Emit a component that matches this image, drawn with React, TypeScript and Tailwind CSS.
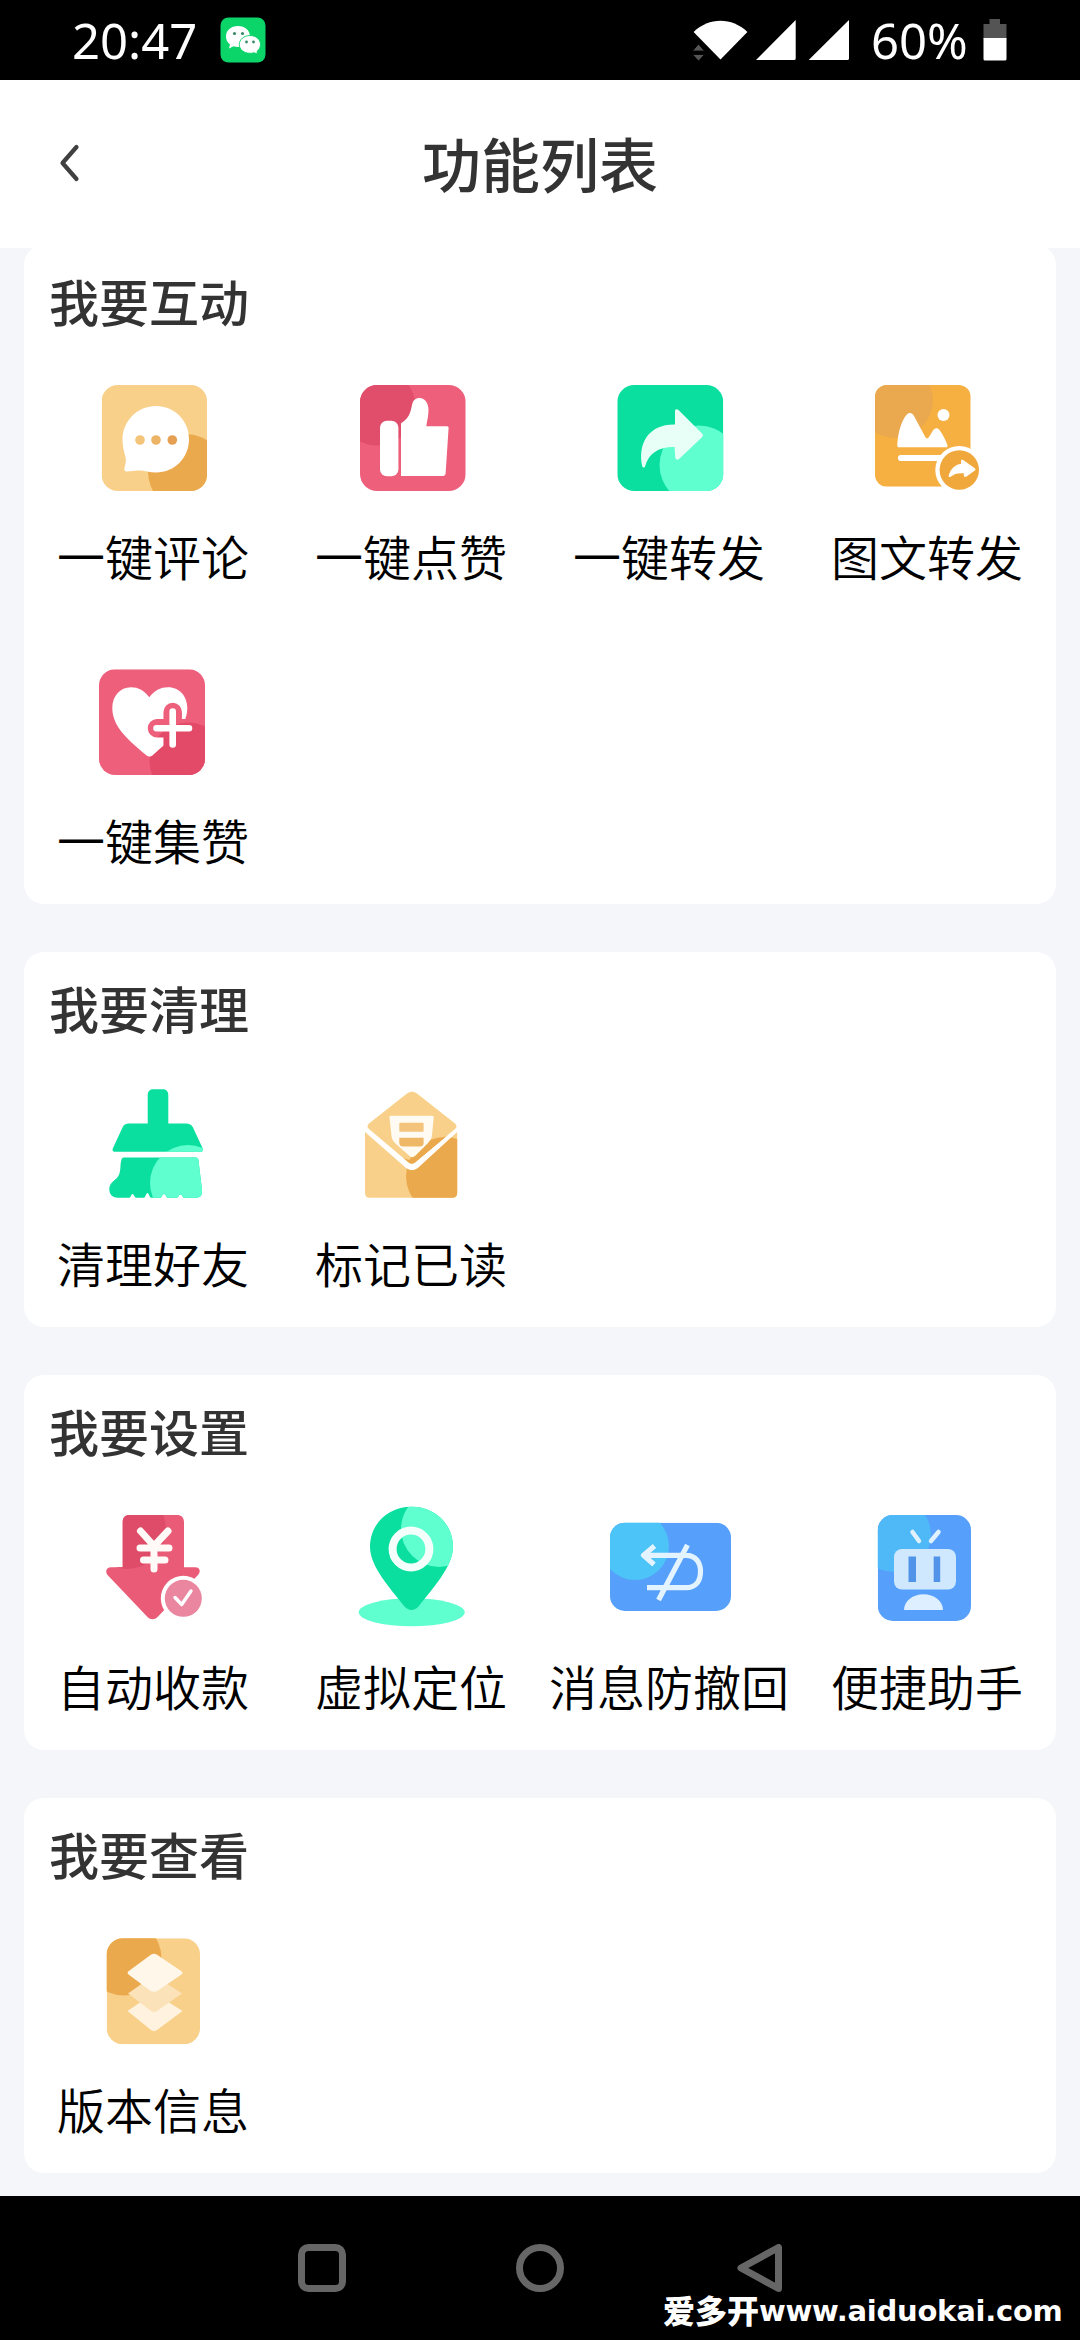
import type { ReactNode } from "react";

const GOLD = "#f8d08a";
const AMBER = "#eaa94d";
const PINK = "#ee5f7c";
const ROSE = "#e04e6c";
const GREEN = "#0adf9f";
const MINT = "#5fffd0";
const BLUE = "#569ffa";
const SKY = "#4dc4f8";

function Tile({ id, x, y, w, h, r, base, spot, cx, cy, cr, children }: {
  id: string; x: number; y: number; w: number; h: number; r: number;
  base: string; spot: string; cx: number; cy: number; cr: number; children?: ReactNode;
}) {
  return (
    <>
      <clipPath id={id}><rect x={x} y={y} width={w} height={h} rx={r} /></clipPath>
      <g clipPath={`url(#${id})`}>
        <rect x={x} y={y} width={w} height={h} fill={base} />
        <circle cx={cx} cy={cy} r={cr} fill={spot} />
      </g>
      {children}
    </>
  );
}

const commentIcon = (
  <Tile id="comment" x={18.7} y={7} w={105.3} h={106} r={16} base={GOLD} spot={AMBER} cx={103} cy={94} cr={38}>
    <path d="M73 28C91.500 28 106 42.500 106 61S92 94.500 73 94.500C66 94.500 60 92 55 92.500L44 93.500C41.500 93.700 41 92 41.500 90C42.300 86.500 43.500 83 42.500 79C40.500 73 39.500 67 39.500 61C40 42.500 54.500 28 73 28Z" fill="#fff" />
    <circle cx="57" cy="62" r="4.800" fill="#f3c479" />
    <circle cx="73" cy="62" r="4.800" fill="#eeb465" />
    <circle cx="89.300" cy="62" r="4.800" fill="#e5a051" />
  </Tile>
);

const likeIcon = (
  <Tile id="like" x={19} y={7} w={105.7} h={106} r={17} base={PINK} spot={ROSE} cx={36} cy={29} cr={38.5}>
    <rect x="39" y="42.700" width="18.400" height="55.600" rx="7" fill="#fff" />
    <path d="M60 46C60 45 61 44.500 62.500 43.500C67.500 40 69.500 35 71 27C71.800 22.500 74.500 20 78.500 20C84 20 87.500 25 87.500 32C87.500 38 86 43 85.300 48.200H106C107.200 48.200 107.700 49 107.600 50L104.600 95.500C104.500 97 103.500 98 102 98H60Z" fill="#fff" />
  </Tile>
);

const shareIcon = (
  <Tile id="share" x={18.3} y={7} w={106} h={106} r={17} base={GREEN} spot={MINT} cx={100} cy={87} cr={39.5}>
    <path d="M76 46.500V33C76 31 78 30.500 79.500 32L103 55.500C104.300 56.800 104.300 58 103 59.300L80 81C78.500 82.500 76.500 81.500 76.300 79.500L75.500 69C61 68.500 50 74.500 46.200 88C45.500 90 43.800 90 43.200 88C38.500 65 50 46 76 46.500Z" fill="#e7fff6" />
  </Tile>
);

const imageShareIcon = (
  <Tile id="imgshare" x={18} y={7} w={95.7} h={101.7} r={12} base="#f6b042" spot="#eaa84f" cx={38} cy={22} cr={38}>
    <path d="M42 69.300C40.800 69.300 40.200 68.500 40.300 67C40.800 56 44 43 49.500 37C52 34 55 34.500 57 38L68 58.500C69.300 61 71 61 72.300 58.500L76 52.500C78 49.500 80.500 49.500 82.500 52C86 57 89 62.500 90.500 67.500C90.800 68.700 90.300 69.300 89 69.300Z" fill="#fff" />
    <circle cx="86.500" cy="37" r="6" fill="#fff" />
    <path d="M44 80H86" stroke="#fff" strokeWidth="6.200" strokeLinecap="round" />
    <circle cx="102.300" cy="92" r="24" fill="#fff" />
    <circle cx="102.300" cy="92" r="19.700" fill="#f0a83c" />
    <path d="M104 86V83C104 81.500 105.300 81.300 106.500 82.200L117.500 90C118.800 91 118.800 92 117.500 92.800L109.500 98.500C108 99.500 106.800 98.800 106.800 97.300V95.300C101 94.800 97 96 94 98.500C92.500 99.700 91.300 99 91.700 97.500C93.500 91 98 86.500 104 86Z" fill="#fff" />
  </Tile>
);

const heartPlusIcon = (
  <Tile id="heart" x={16} y={7.3} w={106} h={105.7} r={16} base={PINK} spot="#e34a68" cx={105} cy={99} cr={38.5}>
    <mask id="heartcut">
      <rect width="140" height="120" fill="#fff" />
      <path d="M89.700 50V91M74 66.300H109" stroke="#000" strokeWidth="18.500" strokeLinecap="round" strokeLinejoin="round" />
    </mask>
    <path mask="url(#heartcut)" d="M66.300 35.300C71 28.500 77.500 25.200 85 25.200C96.500 25.200 104.300 34 104.300 46C104.300 67 84 80 70.500 92.500C67.500 95.200 65.500 95.200 62.500 92.500C48 80 29.300 66 29.300 46C29.300 34 37 25.200 48 25.200C55.500 25.200 61.500 28.500 66.300 35.300Z" fill="#fff" />
    <path d="M89.700 49.500V82.500M73.500 66.300H106" stroke="#fff" strokeWidth="6.600" strokeLinecap="round" />
  </Tile>
);

const broomIcon = (
  <g transform="translate(0 -10)">
    <clipPath id="broom">
      <path d="M64.700 48.500V20C64.700 16.300 67 14.300 70.500 14.300H79.500C83 14.300 85.300 16.300 85.300 20V48.500H103C106.500 48.500 108.300 49.500 110 52.500L119.500 73C120.500 75.500 119.800 76.700 117.500 76.700H32C29.700 76.700 29 75.500 30 73L39.500 52.500C41 49.500 42.500 48.500 46 48.500ZM41 82.500H112.500C114.500 82.500 115.300 83.300 115.500 85.500L119 115C119.500 120 117.500 122.700 113 122.700H101C99.500 122.700 99.500 119.500 97.500 119.500S95.500 122.700 94 122.700H84.500C83 122.700 83 119 81 119S79 122.700 77.500 122.700H68C66.500 122.700 66 118 64.500 118S62.500 122.700 61 122.700H53C51.500 122.700 51 119 49.500 119S48 122.700 46.500 122.700H35C29 122.700 26.300 119 26.300 114C26.300 109 30 106.500 33.500 103.500C39 98 36.500 90 38.500 84.500C38.900 83.200 39.500 82.500 41 82.500Z" />
    </clipPath>
    <g clipPath="url(#broom)">
      <rect y="10" width="140" height="120" fill={GREEN} />
      <circle cx="105" cy="108" r="38" fill={MINT} />
    </g>
  </g>
);

const mailIcon = (
  <g transform="translate(0 -10)">
    <clipPath id="mail">
      <path d="M66 18.500C69.500 16 72.500 16 76 18.500L114 48.500C116 50.500 116 52.500 114 54L74.500 87C72 89 69.500 89 67 87L28 54C26 52.500 26 50.500 28 48.500ZM24 57L64.500 92.500C69 96 73 96 77.500 92.500L116.200 57V118C116.200 121 114.500 122.700 111.500 122.700H28.500C25.500 122.700 24 121 24 118Z" />
    </clipPath>
    <g clipPath="url(#mail)">
      <rect y="10" width="140" height="120" fill={GOLD} />
      <circle cx="104" cy="101" r="39" fill={AMBER} />
      <path d="M71 92L62 83L71.500 86L94 66L108 60Z" fill={AMBER} />
    </g>
    <path d="M50 40.700H91C92.300 40.700 92.800 41.500 92.700 42.700L91 60C90.800 63 89.500 65.500 87 68L74 81C72.300 82.500 70.300 82.500 68.500 81L55 69C52.500 66.500 51 64.500 50.500 61L48.500 42.700C48.400 41.500 48.800 40.700 50 40.700Z" fill="#fffaf2" />
    <rect x="58.300" y="47.700" width="24.300" height="9" rx="1" fill="#f4c47c" />
    <path d="M58.300 62.700H82.600V68C82.600 70.500 81 71.500 79 71.500H62C60 71.500 58.300 70.500 58.300 68Z" fill="#efb867" />
  </g>
);

const payIcon = (
  <g transform="translate(0 -12)">
    <clipPath id="pay">
      <path d="M39.700 71.300V26C39.700 21.500 42.300 19 46.500 19H94C98.300 19 101 21.500 101 26V71.300H112C117 71.300 118 75.500 115 79L74.500 121C71.500 124 67.500 124 64.500 121L25 79.500C21.500 75.500 23.500 71.300 28 71.300Z" />
    </clipPath>
    <g clipPath="url(#pay)">
      <rect y="10" width="140" height="120" fill="#ea5b78" />
      <circle cx="44" cy="34" r="39" fill="#df4c69" />
    </g>
    <path d="M57.500 35L71 50L85 35M71 50V73M57 52H86M60.500 64H82" fill="none" stroke="#fffaf8" strokeWidth="7" strokeLinecap="round" strokeLinejoin="round" />
    <circle cx="100.300" cy="102.300" r="22.500" fill="#fff" />
    <circle cx="100.300" cy="102.300" r="18.500" fill="#ea869f" />
    <path d="M92 101.500L98.700 108.500L108 95" fill="none" stroke="#fff" strokeWidth="3.400" strokeLinecap="round" strokeLinejoin="round" />
  </g>
);

const pinIcon = (
  <g transform="translate(0 -12)">
    <ellipse cx="70.700" cy="116.300" rx="53" ry="14" fill={MINT} />
    <clipPath id="pin">
      <path d="M70.500 10.700C94 10.700 112 28 112 51C112 71 91 93 77.500 110.500C73.500 115 67.500 115 63.500 110.500C50 93 29 71 29 51C29 28 47 10.700 70.500 10.700Z" />
    </clipPath>
    <g clipPath="url(#pin)">
      <rect width="140" height="120" fill={GREEN} />
      <circle cx="98" cy="33" r="38" fill={MINT} />
    </g>
    <circle cx="70" cy="53" r="18.400" fill="none" stroke="#f4fffb" strokeWidth="8" />
  </g>
);

const recallIcon = (
  <g transform="translate(0 -12)">
    <Tile id="recall" x={11} y={26.7} w={121} h={88.3} r={15} base={BLUE} spot={SKY} cx={36} cy={50} cr={34}>
      <path d="M55.500 50L44.500 59.300L55 68.500M45 59.300H87C97 59.300 101.500 67 101.500 75.500C101.500 85 97 91.700 87 91.700H48M88.500 49L59.500 104" fill="none" stroke="#e3f3ff" strokeWidth="5.200" strokeLinejoin="round" />
    </Tile>
  </g>
);

const robotIcon = (
  <g transform="translate(0 -12)">
    <Tile id="robot" x={20.8} y={19} w={93.2} h={106} r={15} base={BLUE} spot="#4fb9f7" cx={37} cy={39} cr={37}>
      <path d="M55.500 36L62 45M81.500 36L74 45" stroke="#dff1ff" strokeWidth="4.500" strokeLinecap="round" />
      <rect x="37" y="53" width="62" height="40.500" rx="8" fill="#cfe8fe" />
      <rect x="51.500" y="60.500" width="7.500" height="25.500" fill="#5193e8" />
      <rect x="76.700" y="60.500" width="6.500" height="25.500" fill="#5193e8" />
      <path d="M47 114C47 105 56 98.300 66.500 98.300S86 105 86 114Z" fill="#def0ff" />
    </Tile>
  </g>
);

const layersIcon = (
  <Tile id="layers" x={23.7} y={7.3} w={93.3} h={106} r={16} base={GOLD} spot={AMBER} cx={41} cy={27} cr={37.5}>
    <path d="M44.500 80L71 62L99.500 80L74 99C72 100.500 70 100.500 68 99Z" fill="#fff3df" />
    <path d="M45 62.500L71 44L99 62.500L74 80C72 81.500 70 81.500 68 80Z" fill="#fce2b8" />
    <path d="M45.500 43.500C44.300 42.300 44.300 41.300 45.500 40.300L67.500 24C70 22.200 72 22.200 74.500 24L98.500 40.300C99.700 41.300 99.700 42.300 98.500 43.500L75 59.500C72.500 61.200 69.500 61.200 67 59.500Z" fill="#fff7ea" />
  </Tile>
);

const sections: { title: string; items: { label: string; icon: ReactNode }[] }[] = [
  {
    title: "我要互动",
    items: [
      { label: "一键评论", icon: commentIcon },
      { label: "一键点赞", icon: likeIcon },
      { label: "一键转发", icon: shareIcon },
      { label: "图文转发", icon: imageShareIcon },
      { label: "一键集赞", icon: heartPlusIcon },
    ],
  },
  {
    title: "我要清理",
    items: [
      { label: "清理好友", icon: broomIcon },
      { label: "标记已读", icon: mailIcon },
    ],
  },
  {
    title: "我要设置",
    items: [
      { label: "自动收款", icon: payIcon },
      { label: "虚拟定位", icon: pinIcon },
      { label: "消息防撤回", icon: recallIcon },
      { label: "便捷助手", icon: robotIcon },
    ],
  },
  { title: "我要查看", items: [{ label: "版本信息", icon: layersIcon }] },
];

function StatusBar() {
  return (
    <div className="flex h-20 shrink-0 items-center bg-black pl-[72px] pr-[73px] font-['Noto_Sans',sans-serif] text-[49px] leading-none text-white">
      <span className="w-[148px]">20:47</span>
      <svg className="h-[46px] w-[46px]" viewBox="0 0 46 46">
        <rect x="0.500" y="0.500" width="45" height="45" rx="8" fill="#0bd468" />
        <path d="M18 9C25 9 30 13.500 30 19.500S25 30 18 30C16.300 30 15 29.800 13.500 29.300L9 31.500L10 27.500C7.300 25.500 6 22.500 6 19.500C6 13.500 11 9 18 9Z" fill="#fff" />
        <path d="M30 18.500C36 18.500 40.500 22.500 40.500 27.500C40.500 30.500 39 32.800 37 34.300L37.500 37L34 35.700C32.800 36.100 31.500 36.300 30 36.300C24 36.300 19.300 32.500 19.300 27.500S24 18.500 30 18.500Z" fill="#fff" stroke="#0bd468" strokeWidth="0.900" />
        <g fill="#3a8a68">
          <circle cx="14.500" cy="16.500" r="1.600" /><circle cx="22.500" cy="16.500" r="1.600" />
          <circle cx="26.500" cy="25" r="1.400" /><circle cx="33.500" cy="25" r="1.400" />
        </g>
      </svg>
      <div className="ml-auto flex items-center">
        <svg className="h-[42px] w-[158px]" viewBox="692 20 158 42">
          <path d="M693.600 33C709 18 732 18 747.400 33L720.500 60.500Z" fill="#fff" />
          <path d="M692.500 52L698.500 45L704.500 52ZM692.500 55.500L698.500 62L704.500 55.500Z" fill="#555" stroke="#000" strokeWidth="0.800" />
          <path d="M795.700 21V59.500Q795.700 61 794 61H756ZM849 21V59.500Q849 61 847.300 61H808.700Z" fill="#fff" />
        </svg>
        <span className="ml-[21px] w-[112px]">60%</span>
        <svg className="h-[42px] w-6" viewBox="0 0 24 42">
          <path d="M6.500 0H17V5H23.500V20H0.500V5H6.500Z" fill="#545454" />
          <path d="M0.500 19H23.500V40Q23.500 41.500 22 41.500H2Q0.500 41.500 0.500 40Z" fill="#fff" />
        </svg>
      </div>
    </div>
  );
}

function NavBar() {
  return (
    <div className="relative h-36 shrink-0 bg-black">
      <div className="flex justify-center gap-[170px] pt-12">
        <svg className="h-12 w-12" viewBox="0 0 48 48" fill="none" stroke="#666" strokeWidth="7">
          <rect x="3.500" y="3.500" width="41" height="41" rx="7" />
        </svg>
        <svg className="h-12 w-12" viewBox="0 0 48 48" fill="none" stroke="#666" strokeWidth="7">
          <circle cx="24" cy="24" r="20.500" />
        </svg>
        <svg className="h-12 w-12" viewBox="0 0 48 48" fill="none" stroke="#666" strokeWidth="7" strokeLinejoin="round">
          <path d="M44.500 3.500V44.500L7 24Z" />
        </svg>
      </div>
      <div className="absolute left-[663px] top-[89px] flex items-center whitespace-nowrap text-white">
        <span className="w-[96px] font-['Noto_Sans_CJK_SC',sans-serif] text-[32px] font-black leading-[44px]">爱多开</span>
        <span className="mt-1 font-['DejaVu_Sans',sans-serif] text-[29px] font-bold leading-[44px] tracking-[-0.25px]">www.aiduokai.com</span>
      </div>
    </div>
  );
}

export default function App() {
  return (
    <div className="flex h-[2340px] w-[1080px] flex-col overflow-hidden bg-[#f5f6fa] font-['Noto_Sans_CJK_SC',sans-serif]">
      <StatusBar />
      <header className="grid h-[168px] shrink-0 grid-cols-3 items-center bg-white px-[58px] pb-0.5">
        <svg className="h-10 w-6" viewBox="0 0 24 40" fill="none" stroke="#404040" strokeWidth="4.200" strokeLinecap="round" strokeLinejoin="round">
          <path d="M18.500 4L4.500 20L18.500 36" />
        </svg>
        <h1 className="text-center text-[59px] font-medium leading-[80px] text-[#333]">功能列表</h1>
      </header>
      <main className="min-h-0 flex-1 overflow-hidden px-6">
        <div className="-mt-[3px] flex flex-col gap-12">
          {sections.map((section) => (
            <section key={section.title} className="rounded-[20px] bg-white pb-[35px] pt-[25px]">
              <h2 className="mb-12 pl-[25px] text-[50px] font-medium leading-[60px] text-[#333]">{section.title}</h2>
              <div className="grid grid-cols-4 gap-y-[77px]">
                {section.items.map((item) => (
                  <div key={item.label} className="flex flex-col items-center gap-[27px]">
                    <svg className="h-[120px] w-[140px] overflow-visible" viewBox="0 0 140 120">{item.icon}</svg>
                    <span className="whitespace-nowrap text-[48px] font-[350] leading-[60px] text-black">{item.label}</span>
                  </div>
                ))}
              </div>
            </section>
          ))}
        </div>
      </main>
      <NavBar />
    </div>
  );
}
